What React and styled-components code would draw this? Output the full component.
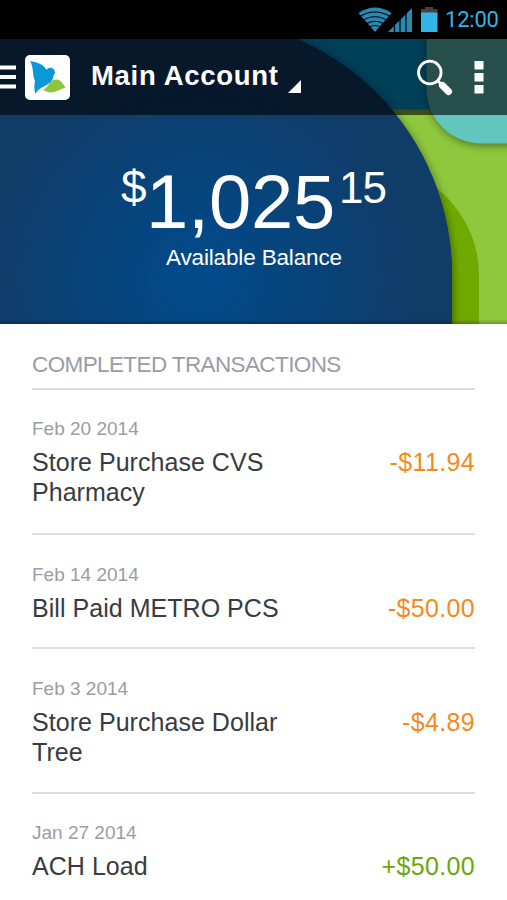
import React from "react";
import styled, { createGlobalStyle } from "styled-components";

const GlobalStyle = createGlobalStyle`
  * { box-sizing: border-box; }
  body { margin: 0; background: #fff; font-family: "Liberation Sans", Arial, sans-serif; }
`;

const Screen = styled.div`
  width: 507px;
  height: 900px;
  overflow: hidden;
  display: flex;
  flex-direction: column;
  background: #fff;
`;

const StatusBar = styled.div`
  height: 39px;
  flex: none;
  background: #000;
  display: flex;
  align-items: center;
  justify-content: flex-end;
  padding-right: 9px;
`;

const StatusIcons = styled.svg`
  display: block;
  width: 80px;
  height: 39px;
  margin-right: 7px;
`;

const Clock = styled.span`
  width: 53px;
  font: 400 22px/39px Roboto, sans-serif;
  letter-spacing: -0.2px;
  white-space: nowrap;
  color: #33b5e5;
`;

const Hero = styled.section`
  position: relative;
  height: 285px;
  flex: none;
  overflow: hidden;
  isolation: isolate;
`;

const HeroArt = styled.svg`
  position: absolute;
  inset: 0;
  z-index: -1;
  width: 507px;
  height: 285px;
`;

const ActionBar = styled.header`
  height: 76px;
  display: flex;
  align-items: center;
  background: rgba(0, 0, 0, 0.6);
  color: #fff;
`;

const MenuIcon = styled.svg`
  width: 16px;
  height: 26px;
  flex: none;
`;

const Logo = styled.svg`
  width: 45px;
  height: 45px;
  margin-left: 9px;
  flex: none;
`;

const Title = styled.h1`
  margin: -2px 0 0 21px;
  width: 197px;
  font-size: 27.5px;
  line-height: 30px;
  font-weight: 700;
  letter-spacing: 0.7px;
  white-space: nowrap;
`;

const Caret = styled.svg`
  width: 13px;
  height: 13px;
  margin-top: 19px;
`;

const SearchIcon = styled.svg`
  width: 38px;
  height: 38px;
  margin-left: 115px;
`;

const MoreIcon = styled.svg`
  width: 10px;
  height: 34px;
  margin-left: 20px;
`;

const Balance = styled.div`
  height: 122px;
  padding-left: 121px;
  display: flex;
  align-items: flex-start;
  color: #fff;
  white-space: nowrap;
`;

const Figure = styled.span`
  font-size: ${(p) => p.$size}px;
  line-height: 1;
  margin-top: ${(p) => p.$top}px;
  width: ${(p) => p.$width}px;
  letter-spacing: ${(p) => p.$track || 0}px;
`;

const BalanceLabel = styled.div`
  padding-left: 166px;
  margin-top: 7px;
  font-size: 22.5px;
  line-height: 28px;
  letter-spacing: -0.15px;
  color: #fff;
  white-space: nowrap;
`;

const Sheet = styled.main`
  flex: 1;
  padding: 25px 32px 0;
`;

const SectionTitle = styled.h2`
  margin: 0;
  height: 41px;
  border-bottom: 2px solid #dadde9;
  font-size: 22.5px;
  line-height: 32px;
  font-weight: 400;
  letter-spacing: -0.61px;
  color: #9a9ca6;
  white-space: nowrap;
`;

const Row = styled.article`
  height: ${(p) => p.$height}px;
  padding-top: 27.4px;
  border-bottom: 2px solid #dadde9;
`;

const DateText = styled.div`
  font-size: 19px;
  line-height: 24px;
  color: #9a9ca6;
`;

const Entry = styled.div`
  display: flex;
  justify-content: space-between;
  margin-top: 6px;
  font-size: 25px;
  line-height: 30px;
`;

const Name = styled.span`
  width: 270px;
  letter-spacing: 0.04px;
  color: #383b41;
`;

const Amount = styled.span`
  letter-spacing: 0.35px;
  color: ${(p) => (p.$credit ? "#6aa70b" : "#f58a1c")};
`;

const transactions = [
  { date: "Feb 20 2014", name: "Store Purchase CVS Pharmacy", amount: "-$11.94", height: 145.2 },
  { date: "Feb 14 2014", name: "Bill Paid METRO PCS", amount: "-$50.00", height: 114.2 },
  { date: "Feb 3 2014", name: "Store Purchase Dollar Tree", amount: "-$4.89", height: 144.2 },
  { date: "Jan 27 2014", name: "ACH Load", amount: "+$50.00", credit: true, height: 114 },
];

function Art() {
  return (
    <HeroArt viewBox="0 39 507 285">
      <defs>
        <radialGradient id="navy" gradientUnits="userSpaceOnUse" cx="200" cy="280" r="215">
          <stop offset="0" stopColor="#004b8c" />
          <stop offset="1" stopColor="#103c68" />
        </radialGradient>
        <linearGradient id="edge" x1="0" y1="0" x2="0" y2="1">
          <stop offset="0" stopColor="#000" stopOpacity="0" />
          <stop offset="1" stopColor="#000" stopOpacity="0.25" />
        </linearGradient>
        <filter id="soft" x="-20%" y="-20%" width="140%" height="140%" colorInterpolationFilters="sRGB">
          <feDropShadow dx="1" dy="2" stdDeviation="4" floodColor="#000" floodOpacity="0.45" />
        </filter>
      </defs>
      <rect y="39" width="507" height="285" fill="#8fc83d" />
      <path d="M300 330V165H369A110 110 0 0 1 479 275V330Z" fill="#70aa00" />
      <rect y="30" width="507" height="79.5" fill="#009ddc" />
      <path d="M426.5 20V89A54.5 54.5 0 0 0 481 143.5H530V20Z" fill="#62c6be" filter="url(#soft)" />
      <path d="M-20 18H195A257 257 0 0 1 452 275V340H-20Z" fill="#103c68" filter="url(#soft)" />
      <path d="M-20 18H195A257 257 0 0 1 452 275V340H-20Z" fill="url(#navy)" />
      <rect y="319" width="507" height="5" fill="url(#edge)" />
    </HeroArt>
  );
}

export default function App() {
  return (
    <Screen>
      <GlobalStyle />
      <StatusBar>
        <StatusIcons viewBox="358 0 80 39">
          <path d="M375 32L358.500 13Q375 2 391.500 13Z" fill="#2989b0" />
          <g fill="none" stroke="#000" strokeWidth="1.2">
            <path d="M359 17Q375 7 391 17M362 21Q375 12.500 388 21M365 24.500Q375 18 385 24.500M368 28Q375 23 382 28" />
          </g>
          <path d="M388 32L412 8V32Z" fill="#2989b0" />
          <path d="M394.500 20V32M400 15V32M406 9V32" stroke="#000" strokeWidth="1.2" />
          <path d="M421 9H425V7H433V9H437.500V13H421Z" fill="#444" />
          <rect x="421" y="12.500" width="16.500" height="19.500" fill="#33b5e5" />
        </StatusIcons>
        <Clock>12:00</Clock>
      </StatusBar>
      <Hero>
        <Art />
        <ActionBar>
          <MenuIcon viewBox="0 0 16 26">
            <path d="M0 3.500H16M0 13H16M0 22.500H16" stroke="#fff" strokeWidth="4" />
          </MenuIcon>
          <Logo viewBox="25 55 45 45">
            <rect x="25" y="55" width="45" height="45" rx="5" fill="#fff" />
            <path d="M30 61C36 62 44 64 46.500 70C48 67 52 67 54 69.500L55.200 73L53.500 75.500C53 86 40 85 35.500 94C34 89 34 85 35 81C32 74 34 68 30 61Z" fill="#0a98d8" />
            <path d="M43 90C49 87 49 79 57 79.500C61 80 63 84 65.500 87.500C60 89 53 96 43 90Z" fill="#8dc63f" />
          </Logo>
          <Title>Main Account</Title>
          <Caret viewBox="0 0 13 13"><path d="M0 13L13 0V13Z" fill="#fff" /></Caret>
          <SearchIcon viewBox="416 58 38 38">
            <circle cx="429.800" cy="72.500" r="11.300" fill="none" stroke="#fff" strokeWidth="2.800" />
            <path d="M437.500 80.500L442 85" stroke="#fff" strokeWidth="3" />
            <path d="M442.500 85.500L448.500 91.500" stroke="#fff" strokeWidth="7" strokeLinecap="round" />
          </SearchIcon>
          <MoreIcon viewBox="0 0 10 34">
            <path d="M.5 1h9v8.500h-9zM.5 13h9v8.500h-9zM.5 25h9v8.500h-9z" fill="#fff" />
          </MoreIcon>
        </ActionBar>
        <Balance>
          <Figure $size={46} $top={49} $width={25}>$</Figure>
          <Figure $size={76} $top={49} $width={193} $track={-0.2}>1,025</Figure>
          <Figure $size={44} $top={51} $width={50} $track={-1}>15</Figure>
        </Balance>
        <BalanceLabel>Available Balance</BalanceLabel>
      </Hero>
      <Sheet>
        <SectionTitle>COMPLETED TRANSACTIONS</SectionTitle>
        {transactions.map((t) => (
          <Row key={t.date} $height={t.height}>
            <DateText>{t.date}</DateText>
            <Entry>
              <Name>{t.name}</Name>
              <Amount $credit={t.credit}>{t.amount}</Amount>
            </Entry>
          </Row>
        ))}
      </Sheet>
    </Screen>
  );
}
